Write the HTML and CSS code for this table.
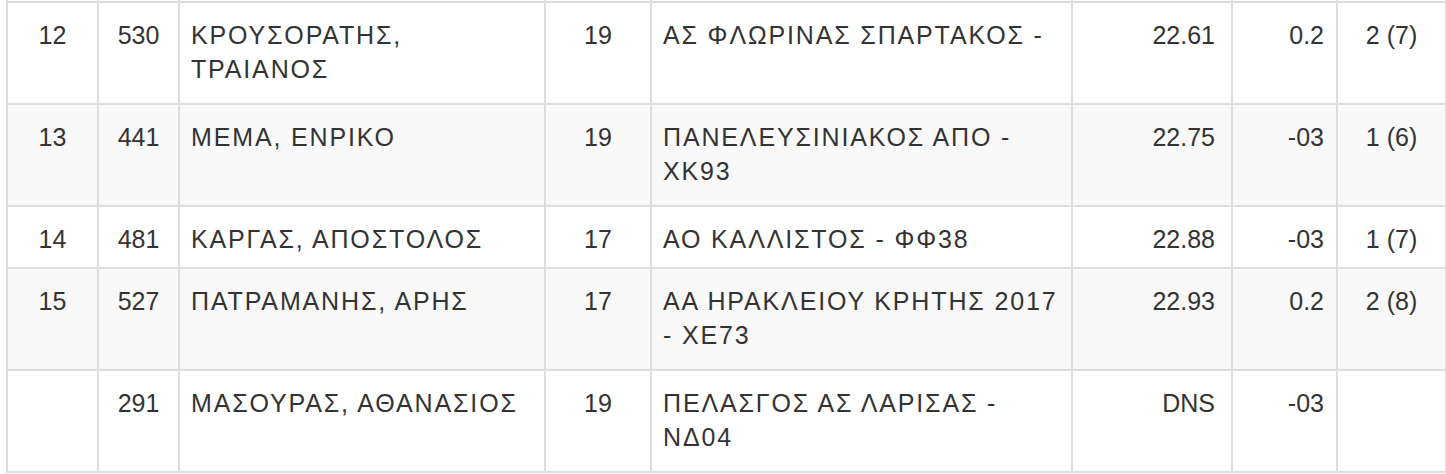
FILE: index.html
```html
<!DOCTYPE html>
<html lang="el">
<head>
<meta charset="utf-8">
<title>Αποτελέσματα</title>
<link rel="stylesheet" href="styles.css">
</head>
<body>
<table class="results">
  <colgroup>
    <col class="c-rank"><col class="c-bib"><col class="c-name"><col class="c-yob"><col class="c-club"><col class="c-mark"><col class="c-wind"><col class="c-heat">
  </colgroup>
  <tbody>
    <tr class="cut"><td></td><td></td><td></td><td></td><td></td><td></td><td></td><td></td></tr>
    <tr class="tall">
      <td class="ctr">12</td><td class="ctr">530</td><td class="txt">ΚΡΟΥΣΟΡΑΤΗΣ, ΤΡΑΙΑΝΟΣ</td><td class="ctr">19</td><td class="txt">ΑΣ ΦΛΩΡΙΝΑΣ ΣΠΑΡΤΑΚΟΣ -</td><td class="num">22.61</td><td class="num wind">0.2</td><td class="ctr">2 (7)</td>
    </tr>
    <tr class="tall alt">
      <td class="ctr">13</td><td class="ctr">441</td><td class="txt">ΜΕΜΑ, ΕΝΡΙΚΟ</td><td class="ctr">19</td><td class="txt">ΠΑΝΕΛΕΥΣΙΝΙΑΚΟΣ ΑΠΟ - ΧΚ93</td><td class="num">22.75</td><td class="num wind">-03</td><td class="ctr">1 (6)</td>
    </tr>
    <tr>
      <td class="ctr">14</td><td class="ctr">481</td><td class="txt">ΚΑΡΓΑΣ, ΑΠΟΣΤΟΛΟΣ</td><td class="ctr">17</td><td class="txt">ΑΟ ΚΑΛΛΙΣΤΟΣ - ΦΦ38</td><td class="num">22.88</td><td class="num wind">-03</td><td class="ctr">1 (7)</td>
    </tr>
    <tr class="tall alt">
      <td class="ctr">15</td><td class="ctr">527</td><td class="txt">ΠΑΤΡΑΜΑΝΗΣ, ΑΡΗΣ</td><td class="ctr">17</td><td class="txt">ΑΑ ΗΡΑΚΛΕΙΟΥ ΚΡΗΤΗΣ 2017 - ΧΕ73</td><td class="num">22.93</td><td class="num wind">0.2</td><td class="ctr">2 (8)</td>
    </tr>
    <tr class="tall">
      <td class="ctr"></td><td class="ctr">291</td><td class="txt">ΜΑΣΟΥΡΑΣ, ΑΘΑΝΑΣΙΟΣ</td><td class="ctr">19</td><td class="txt">ΠΕΛΑΣΓΟΣ ΑΣ ΛΑΡΙΣΑΣ - ΝΔ04</td><td class="num">DNS</td><td class="num wind">-03</td><td class="ctr"></td>
    </tr>
  </tbody>
</table>
</body>
</html>
```

FILE: styles.css
```css
html, body {
  margin: 0;
  padding: 0;
  background: #ffffff;
}

body {
  padding-left: 6px;
  font-family: "Liberation Sans", Arial, Helvetica, sans-serif;
  font-size: 25px;
  line-height: 34px;
  color: #333333;
}

.results {
  width: 1439px;
  border-collapse: collapse;
  table-layout: fixed;
}

.c-rank { width: 91px; }
.c-bib { width: 81px; }
.c-name { width: 366px; }
.c-yob { width: 106px; }
.c-club { width: 421px; }
.c-mark { width: 160px; }
.c-wind { width: 105px; }
.c-heat { width: 109px; }

.results td {
  border: 2px solid #dddddd;
  padding: 15px 12px 11px 11px;
  vertical-align: top;
  text-align: left;
}

.results tr.tall td {
  padding-bottom: 17px;
}

.results tr.alt td {
  background: #f9f9f9;
}

.results tr.cut td {
  border-top: 0;
  padding: 0;
  height: 1px;
  line-height: 1px;
  font-size: 1px;
}

.results td.txt {
  letter-spacing: 1.85px;
}

.results td.ctr {
  text-align: center;
  padding-left: 8px;
  padding-right: 8px;
}

.results td.num {
  text-align: right;
  padding-right: 16px;
}

.results td.wind {
  padding-right: 12px;
}
```
